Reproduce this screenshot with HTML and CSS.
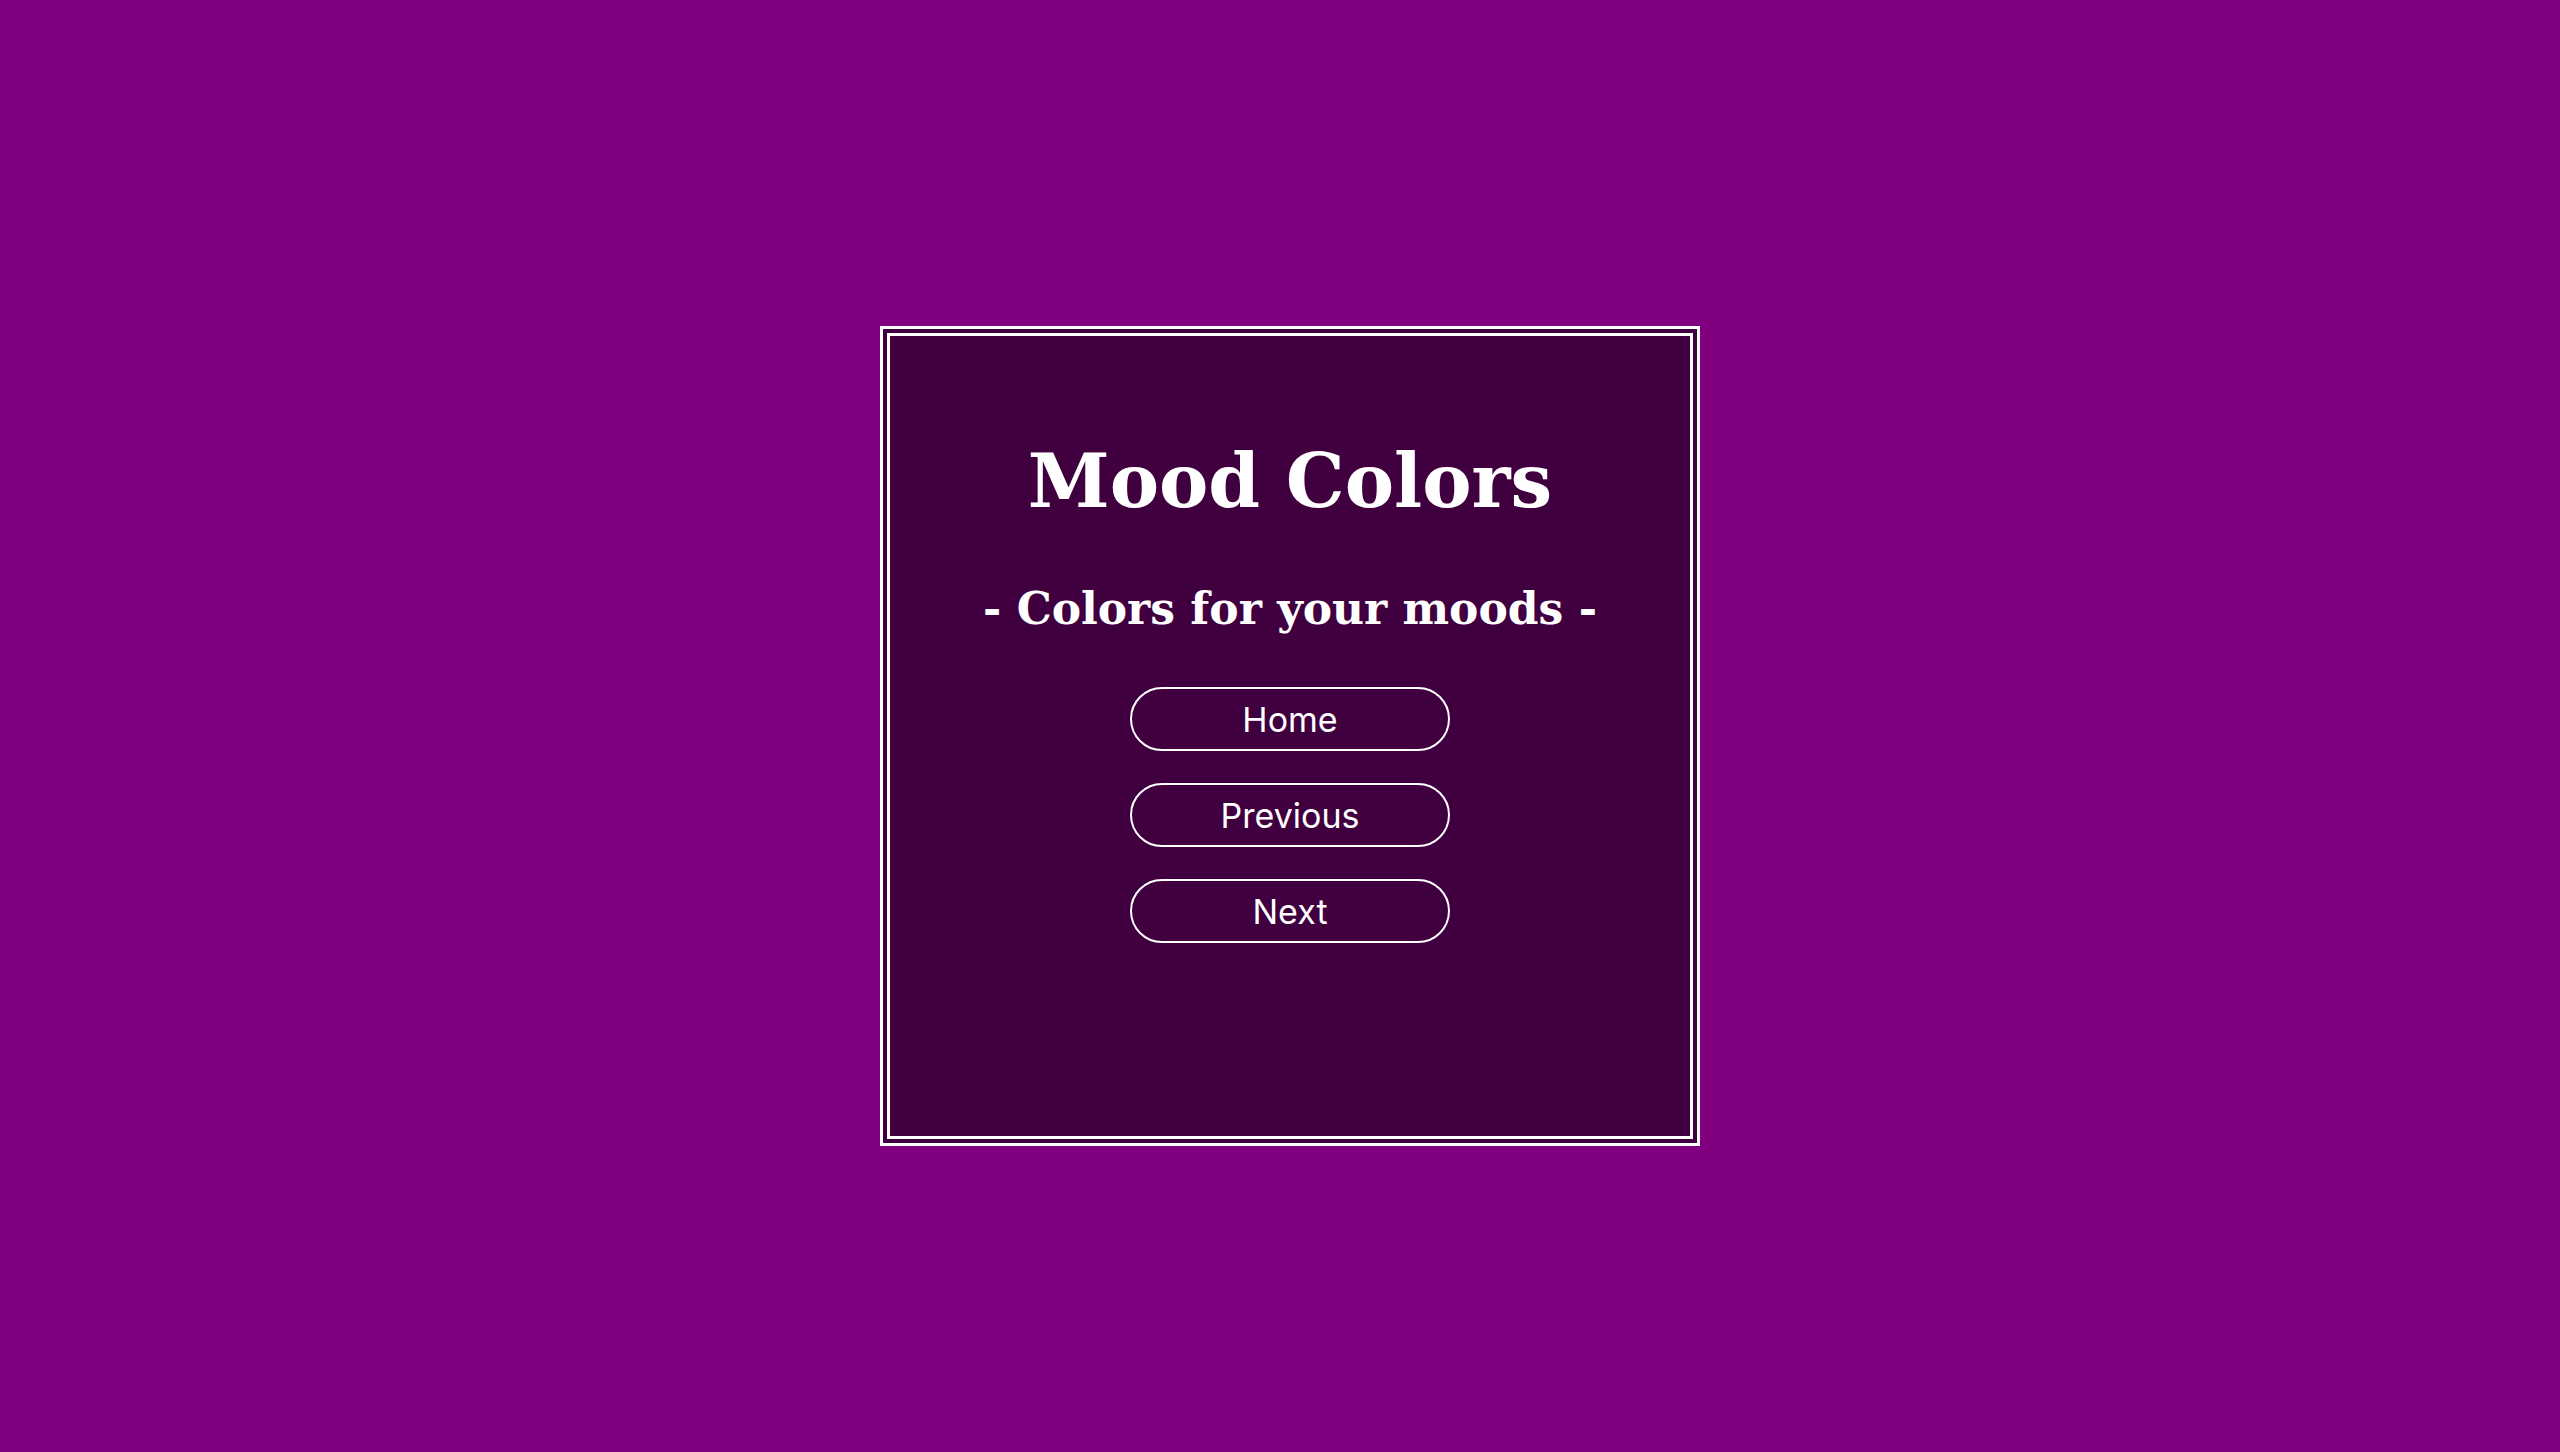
FILE: index.html
```html
<!DOCTYPE html>
<html lang="en">
<head>
<meta charset="utf-8">
<title>Mood Colors</title>
<link rel="stylesheet" href="styles.css">
</head>
<body>
<div class="stage">
  <main class="card">
    <h1 class="title">Mood Colors</h1>
    <h2 class="subtitle">- Colors for your moods -</h2>
    <nav class="nav">
      <button class="btn">Home</button>
      <button class="btn">Previous</button>
      <button class="btn">Next</button>
    </nav>
  </main>
</div>
</body>
</html>
```

FILE: styles.css
```css
html, body {
  margin: 0;
  padding: 0;
  background: #800080;
}

.stage {
  box-sizing: border-box;
  min-height: 100vh;
  padding: 20px 0 0 20px;
  display: flex;
  align-items: center;
  justify-content: center;
}

.card {
  box-sizing: border-box;
  width: 820px;
  height: 820px;
  border: 10px double #ffffff;
  background: #400040;
  display: flex;
  flex-direction: column;
  align-items: center;
  padding-top: 108px;
}

.title {
  margin: 0;
  font-family: "DejaVu Serif", "Liberation Serif", serif;
  font-weight: bold;
  font-size: 74px;
  line-height: 1;
  color: #ffffff;
}

.subtitle {
  margin: 69px 0 0 0;
  font-family: "DejaVu Serif", "Liberation Serif", serif;
  font-weight: bold;
  font-size: 44px;
  line-height: 1;
  color: #ffffff;
}

.nav {
  margin-top: 56px;
  display: flex;
  flex-direction: column;
  gap: 32px;
}

.btn {
  box-sizing: border-box;
  width: 320px;
  height: 64px;
  border: 2px solid #ffffff;
  border-radius: 32px;
  background: transparent;
  color: #ffffff;
  font-family: Inter, "Liberation Sans", sans-serif;
  font-size: 34px;
  padding: 0;
}
```
